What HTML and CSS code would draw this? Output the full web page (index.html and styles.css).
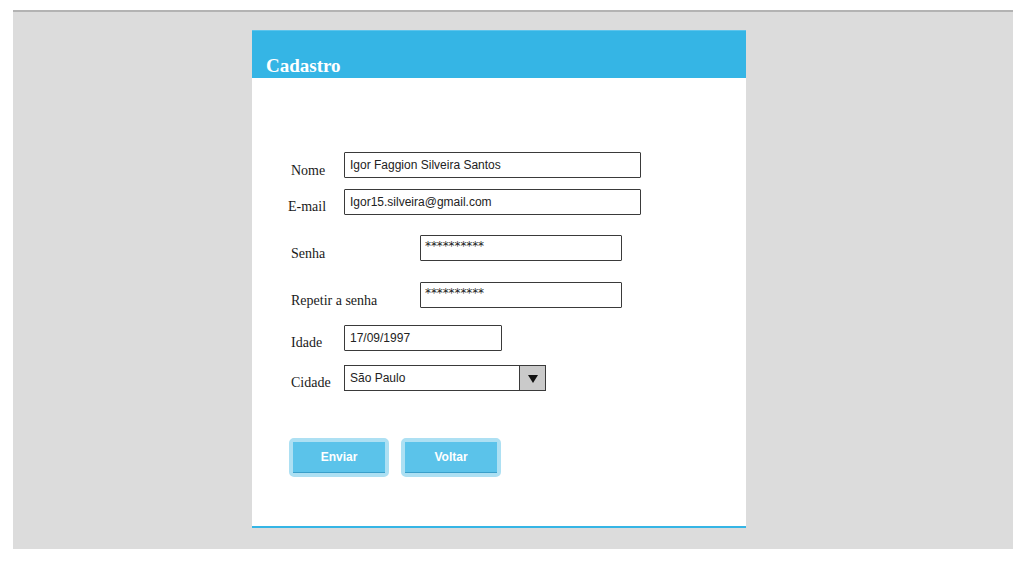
FILE: index.html
```html
<!DOCTYPE html>
<html lang="pt">
<head>
<meta charset="utf-8">
<title>Cadastro</title>
<link rel="stylesheet" href="styles.css">
</head>
<body>
<div class="stage">
  <div class="card">
    <div class="card-header"><h1 class="title">Cadastro</h1></div>
    <form class="form">
      <div class="row row-nome">
        <span class="label lbl-short">Nome</span>
        <div class="field field-wide">Igor Faggion Silveira Santos</div>
      </div>
      <div class="row row-email">
        <span class="label lbl-short lbl-email">E-mail</span>
        <div class="field field-wide">Igor15.silveira@gmail.com</div>
      </div>
      <div class="row row-senha">
        <span class="label lbl-long">Senha</span>
        <div class="field field-pass">**********</div>
      </div>
      <div class="row row-repetir">
        <span class="label lbl-long">Repetir a senha</span>
        <div class="field field-pass">**********</div>
      </div>
      <div class="row row-idade">
        <span class="label lbl-short">Idade</span>
        <div class="field field-date">17/09/1997</div>
      </div>
      <div class="row row-cidade">
        <span class="label lbl-short">Cidade</span>
        <div class="select">
          <span class="select-value">São Paulo</span>
          <span class="select-btn"><span class="arrow"></span></span>
        </div>
      </div>
      <div class="actions">
        <div class="btn-wrap"><span class="btn">Enviar</span></div>
        <div class="btn-wrap"><span class="btn">Voltar</span></div>
      </div>
    </form>
  </div>
</div>
</body>
</html>
```

FILE: styles.css
```css
html, body {
  margin: 0;
  padding: 0;
  background: #ffffff;
}

.stage {
  margin: 10px 0 0 13px;
  width: 1000px;
  height: 519px;
  background: #dcdcdc;
  border-top: 2px solid #b3b3b3;
  padding-top: 18px;
}

.card {
  margin-left: 239px;
  width: 494px;
  height: 496px;
  background: #ffffff;
  border-bottom: 2px solid #35b5e5;
}

.card-header {
  height: 47px;
  background: #35b5e5;
  border-top: 1px solid #5cc4ec;
  display: flex;
  align-items: flex-end;
  padding-left: 14px;
}

.title {
  margin: 0;
  font-family: "Liberation Serif", "Times New Roman", serif;
  font-weight: bold;
  font-size: 19px;
  color: #ffffff;
  line-height: 24px;
}

.form {
  padding: 74px 0 0 39px;
  font-family: "Liberation Serif", "Times New Roman", serif;
}

.row {
  display: flex;
  align-items: center;
  height: 26px;
}

.row-email { margin-top: 11px; }
.row-senha { margin-top: 20px; }
.row-repetir { margin-top: 21px; }
.row-idade { margin-top: 17px; }
.row-cidade { margin-top: 14px; }

.label {
  font-size: 14px;
  color: #1a1a1a;
  padding-top: 11px;
  flex: none;
}

.lbl-short { width: 53px; }
.lbl-email { margin-left: -3px; width: 56px; padding-top: 9px; }
.lbl-long { width: 129px; padding-top: 11px; }
.row-idade .label, .row-cidade .label { padding-top: 9px; }

.field {
  height: 26px;
  box-sizing: border-box;
  border: 1px solid #3a3a3a;
  border-radius: 1px;
  background: #ffffff;
  font-family: "Liberation Sans", "DejaVu Sans", sans-serif;
  font-size: 12px;
  color: #222222;
  padding: 5px 0 0 5px;
  white-space: nowrap;
}

.field-wide { width: 297px; }
.field-pass {
  width: 202px;
  padding-left: 4px;
  padding-top: 3px;
  font-family: "DejaVu Sans", sans-serif;
  font-size: 12px;
  letter-spacing: -0.1px;
}
.field-date { width: 158px; }

.select {
  width: 202px;
  height: 26px;
  box-sizing: border-box;
  border: 1px solid #3a3a3a;
  display: flex;
  background: #ffffff;
}

.select-value {
  flex: 1;
  font-family: "Liberation Sans", "DejaVu Sans", sans-serif;
  font-size: 12px;
  color: #222222;
  padding: 5px 0 0 5px;
}

.select-btn {
  width: 25px;
  background: #cacaca;
  border-left: 1px solid #3a3a3a;
  display: flex;
  align-items: center;
  justify-content: center;
}

.arrow {
  width: 0;
  height: 0;
  border-left: 5px solid transparent;
  border-right: 5px solid transparent;
  border-top: 8px solid #111111;
  margin-top: 1px;
}

.actions {
  display: flex;
  gap: 12px;
  margin-top: 47px;
  margin-left: -2px;
}

.btn-wrap {
  width: 100px;
  height: 39px;
  box-sizing: border-box;
  border: 4px solid #ade0f3;
  border-radius: 5px;
  background: #ade0f3;
}

.btn {
  display: flex;
  align-items: center;
  justify-content: center;
  height: 31px;
  box-sizing: border-box;
  background: #5bc3ea;
  border-bottom: 1px solid #3a9fca;
  font-family: "Liberation Sans", Arial, sans-serif;
  font-weight: bold;
  font-size: 12px;
  color: #ffffff;
}
```
